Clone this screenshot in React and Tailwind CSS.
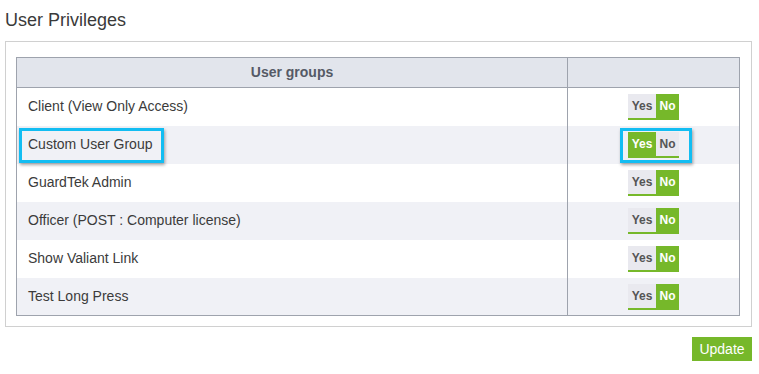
import React from 'react'

const groups = [
  { name: 'Client (View Only Access)', yes: false },
  { name: 'Custom User Group', yes: true, marked: true },
  { name: 'GuardTek Admin', yes: false },
  { name: 'Officer (POST : Computer license)', yes: false },
  { name: 'Show Valiant Link', yes: false },
  { name: 'Test Long Press', yes: false },
]

const Toggle = ({ yes }) => (
  <div className='inline-flex h-[26px] border-b-2 border-[#76b82a] text-[12px] font-bold leading-none'>
    <span className={`flex w-[28px] items-center justify-center ${yes ? 'bg-[#76b82a] text-white' : 'bg-[#e9e9ef] text-[#555]'}`}>Yes</span>
    <span className={`flex w-[23px] items-center justify-center ${yes ? 'bg-[#e9e9ef] text-[#555]' : 'bg-[#76b82a] text-white'}`}>No</span>
  </div>
)

const App = () => {
  return (
    <div className='min-h-screen bg-white font-["Liberation_Sans",Arial,sans-serif] text-[#333]'>
      <h2 className='px-[5px] pt-[9px] text-[18px] leading-[22px] text-[#3a3a3a]'>User Privileges</h2>
      <div className='mx-[5px] mt-[10px] mr-[7px] border border-[#d0d0d0] pt-[15px] pb-[10px] pl-[10px] pr-[11px]'>
        <table className='w-full border-collapse border border-[#9ea3ad] text-[14px]'>
          <thead>
            <tr className='h-[30px] bg-[#e2e5ec]'>
              <th className='w-[551px] border border-[#9ea3ad] text-center font-bold text-[#555a66]'>User groups</th>
              <th className='border border-[#9ea3ad]'></th>
            </tr>
          </thead>
          <tbody>
            {groups.map((g, i) => (
              <tr key={g.name} className={`h-[38px] ${i % 2 ? 'bg-[#f0f1f6]' : 'bg-white'}`}>
                <td className='relative pl-[11px] text-[#3b3b3b]'>
                  {g.marked && (
                    <span className='absolute left-[2px] top-[2px] h-[35px] w-[145px] border-[3px] border-[#12bdf2] shadow-[1px_2px_3px_rgba(0,0,0,0.35)]'></span>
                  )}
                  {g.name}
                </td>
                <td className='relative border-l border-[#9ea3ad] text-center align-middle'>
                  {g.marked && (
                    <span className='absolute left-[52px] top-[2px] h-[35px] w-[72px] border-[3px] border-[#12bdf2] shadow-[1px_2px_3px_rgba(0,0,0,0.35)]'></span>
                  )}
                  <div className='flex justify-center pt-[1px]'>
                    <Toggle yes={g.yes} />
                  </div>
                </td>
              </tr>
            ))}
          </tbody>
        </table>
      </div>
      <div className='flex justify-end pr-[7px] pt-[10px]'>
        <button className='h-[24px] w-[60px] bg-[#76b82a] text-[14px] text-white'>Update</button>
      </div>
    </div>
  )
}

export default App
